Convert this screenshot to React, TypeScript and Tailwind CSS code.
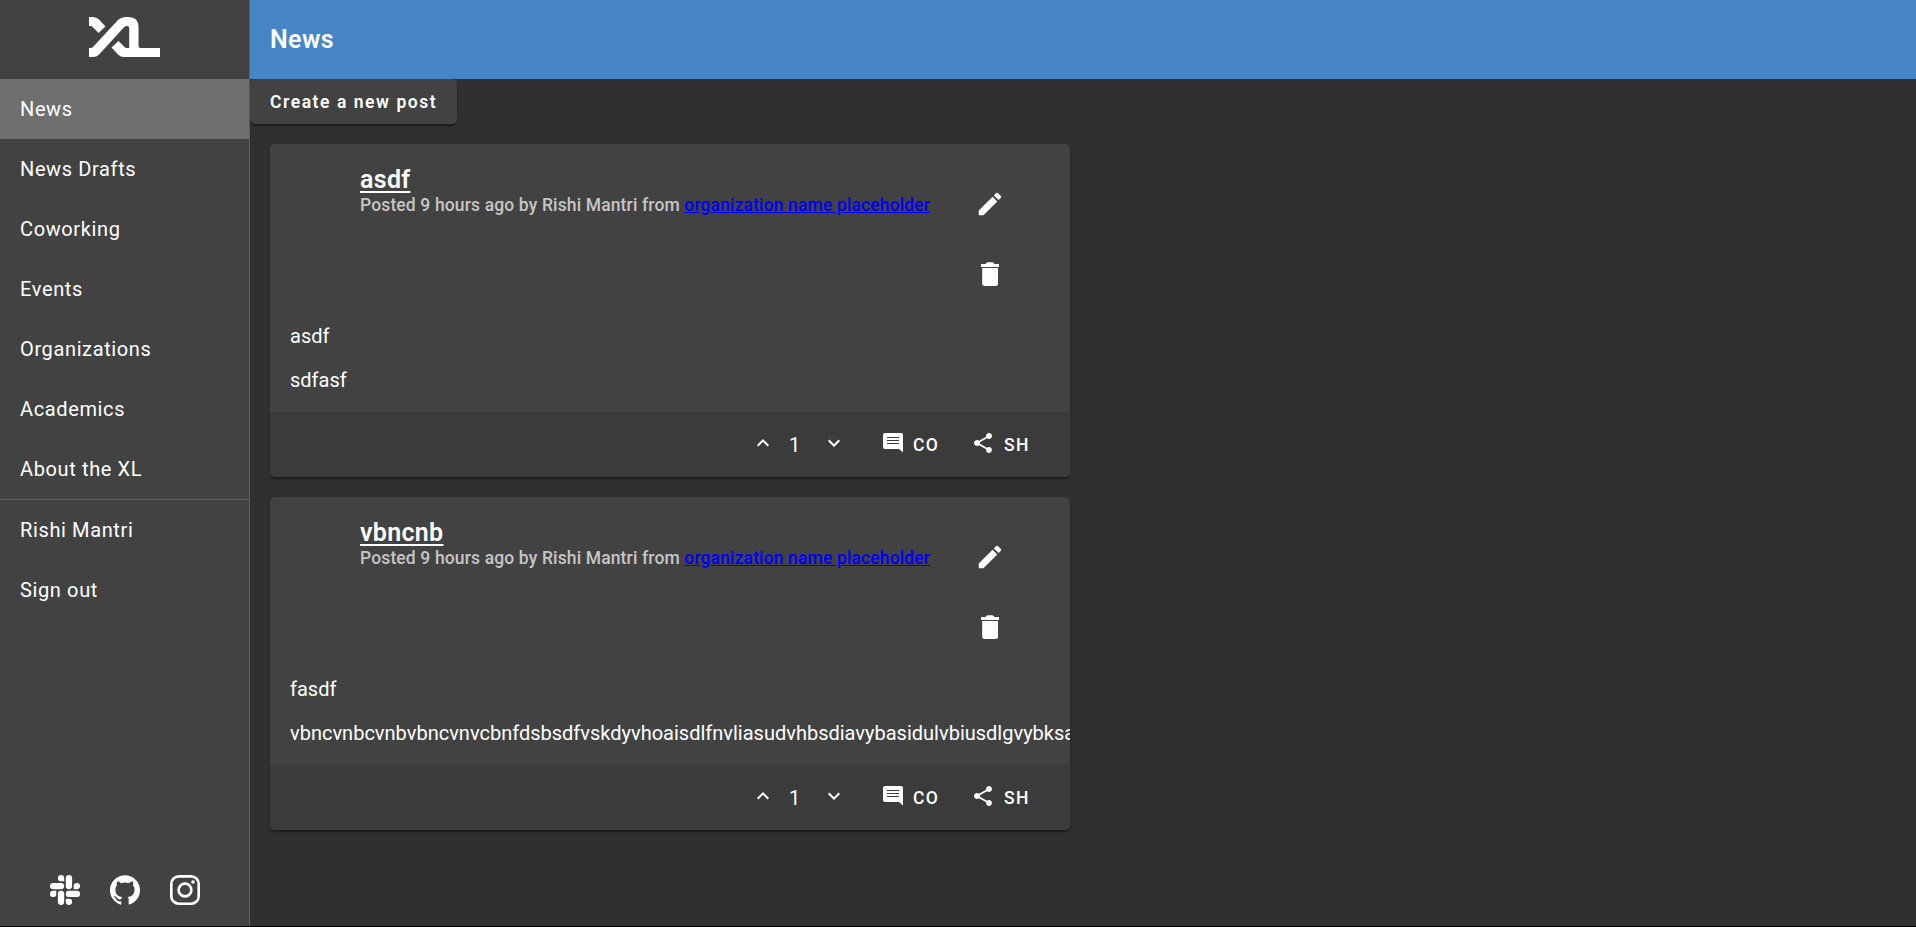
import { MdEdit, MdExpandLess, MdExpandMore, MdShare } from "react-icons/md";

const primaryLinks = ["News", "News Drafts", "Coworking", "Events", "Organizations", "Academics", "About the XL"];
const accountLinks = ["Rishi Mantri", "Sign out"];

type Post = { title: string; body: string[] };

const posts: Post[] = [
  { title: "asdf", body: ["asdf", "sdfasf"] },
  {
    title: "vbncnb",
    body: ["fasdf", "vbncvnbcvnbvbncvnvcbnfdsbsdfvskdyvhoaisdlfnvliasudvhbsdiavybasidulvbiusdlgvybksadvbkuysdb"],
  },
];

function Logo() {
  return (
    <svg width="71" height="40" viewBox="0 0 71 40" fill="#fff" aria-label="XL">
      <path d="M0 0H4Q7.500 0 10 2.500L16.500 9.500L9.500 16L3.500 9.700Q2.800 9 1.700 9H0Z" />
      <path
        fillRule="evenodd"
        d="M0 40V31H1.700Q3 31 4 30L28.500 3.500Q32 0 37 0H39.500Q49.500 0 49.500 10V29Q49.500 31 51.500 31H71V40H35Q31.500 40 29 37.500L22.500 30.500L29.500 24L35.500 30Q36.500 31 38 31H40.200V11Q40.200 9 38 9Q36.300 9 35 10.300L11 36.500Q8 40 4 40Z"
      />
    </svg>
  );
}

function NavItem({ label, active }: { label: string; active?: boolean }) {
  return (
    <a className={`flex h-[60px] items-center px-5 text-[20px] tracking-[0.625px] ${active ? "bg-[#6f6f6f]" : ""}`}>
      {label}
    </a>
  );
}

function TrashIcon() {
  return (
    <svg width="30" height="30" viewBox="0 0 30 30" fill="#fff">
      <path d="M6 5H10.500Q11.300 3.200 13 3.200H17Q18.700 3.200 19.500 5H24V8H6Z" />
      <path d="M7.200 9H23V24.500Q23 27 20.500 27H9.700Q7.200 27 7.200 24.500Z" />
    </svg>
  );
}

function CommentIcon() {
  return (
    <svg width="24" height="24" viewBox="0 0 24 24" className="mb-[3px] ml-[35px]">
      <path d="M4 2H20.300Q22 2 22 3.700V21.500L18 18H4Q2 18 2 16V4Q2 2 4 2Z" fill="#fff" />
      <path d="M6 6.500H18M6 9.500H18M6 12.500H18" stroke="#3b3b3b" strokeWidth="1.200" />
    </svg>
  );
}

function SlackIcon() {
  return (
    <svg width="30" height="30" viewBox="0 0 24 24" fill="#fff">
      <path d="M5.042 15.165a2.528 2.528 0 0 1-2.520 2.523A2.528 2.528 0 0 1 0 15.165a2.527 2.527 0 0 1 2.522-2.520h2.520v2.520zM6.313 15.165a2.527 2.527 0 0 1 2.521-2.520 2.527 2.527 0 0 1 2.521 2.520v6.313A2.528 2.528 0 0 1 8.834 24a2.528 2.528 0 0 1-2.521-2.522v-6.313zM8.834 5.042a2.528 2.528 0 0 1-2.521-2.520A2.528 2.528 0 0 1 8.834 0a2.528 2.528 0 0 1 2.521 2.522v2.520H8.834zM8.834 6.313a2.528 2.528 0 0 1 2.521 2.521 2.528 2.528 0 0 1-2.521 2.521H2.522A2.528 2.528 0 0 1 0 8.834a2.528 2.528 0 0 1 2.522-2.521h6.312zM18.956 8.834a2.528 2.528 0 0 1 2.522-2.521A2.528 2.528 0 0 1 24 8.834a2.528 2.528 0 0 1-2.522 2.521h-2.522V8.834zM17.688 8.834a2.528 2.528 0 0 1-2.523 2.521 2.527 2.527 0 0 1-2.520-2.521V2.522A2.527 2.527 0 0 1 15.165 0a2.528 2.528 0 0 1 2.523 2.522v6.312zM15.165 18.956a2.528 2.528 0 0 1 2.523 2.522A2.528 2.528 0 0 1 15.165 24a2.527 2.527 0 0 1-2.520-2.522v-2.522h2.520zM15.165 17.688a2.527 2.527 0 0 1-2.520-2.523 2.526 2.526 0 0 1 2.520-2.520h6.313A2.527 2.527 0 0 1 24 15.165a2.528 2.528 0 0 1-2.522 2.523h-6.313z" />
    </svg>
  );
}

function GithubIcon() {
  return (
    <svg width="30" height="30" viewBox="0 0 24 24" fill="#fff">
      <path d="M12 .297c-6.630 0-12 5.373-12 12 0 5.303 3.438 9.800 8.205 11.385.6.113.82-.258.82-.577 0-.285-.01-1.040-.015-2.040-3.338.724-4.042-1.610-4.042-1.610C4.422 18.070 3.633 17.700 3.633 17.700c-1.087-.744.084-.729.084-.729 1.205.084 1.838 1.236 1.838 1.236 1.070 1.835 2.809 1.305 3.495.998.108-.776.417-1.305.76-1.605-2.665-.3-5.466-1.332-5.466-5.930 0-1.310.465-2.380 1.235-3.220-.135-.303-.54-1.523.105-3.176 0 0 1.005-.322 3.300 1.230.96-.267 1.980-.399 3-.405 1.020.006 2.040.138 3 .405 2.280-1.552 3.285-1.230 3.285-1.230.645 1.653.24 2.873.12 3.176.765.84 1.230 1.910 1.230 3.220 0 4.610-2.805 5.625-5.475 5.920.42.36.81 1.096.81 2.220 0 1.606-.015 2.896-.015 3.286 0 .315.21.69.825.57C20.565 22.092 24 17.592 24 12.297c0-6.627-5.373-12-12-12" />
    </svg>
  );
}

function InstagramIcon() {
  return (
    <svg width="30" height="30" viewBox="0 0 24 24" fill="none" stroke="#fff" strokeWidth="2.100">
      <rect x="1.050" y="1.050" width="21.900" height="21.900" rx="6" />
      <circle cx="12" cy="12" r="5.100" />
      <circle cx="18.400" cy="5.600" r="1.440" fill="#fff" stroke="none" />
    </svg>
  );
}

function Sidebar() {
  return (
    <aside className="flex w-[250px] shrink-0 flex-col border-r border-[#5f5f5f] bg-[#424242]">
      <div className="flex h-[79px] justify-center pt-[17px]">
        <Logo />
      </div>
      <nav>
        {primaryLinks.map((label) => (
          <NavItem key={label} label={label} active={label === "News"} />
        ))}
      </nav>
      <div className="border-t border-[#5f5f5f]">
        {accountLinks.map((label) => (
          <NavItem key={label} label={label} />
        ))}
      </div>
      <div className="mt-auto mb-[21px] flex justify-center gap-[30px]">
        <SlackIcon />
        <GithubIcon />
        <InstagramIcon />
      </div>
    </aside>
  );
}

const cardShadow =
  "shadow-[0_2.5px_1.25px_-1.25px_rgba(0,0,0,0.2),0_1.25px_1.25px_0_rgba(0,0,0,0.14),0_1.25px_3.75px_0_rgba(0,0,0,0.12)]";

function PostCard({ title, body }: Post) {
  return (
    <article className={`flex h-[333px] w-[800px] flex-col overflow-hidden rounded-[5px] bg-[#424242] ${cardShadow}`}>
      <header className="flex h-[170px] shrink-0 pl-[90px]">
        <div className="w-[595px] shrink-0 pt-[21px]">
          <h2 className="text-[25px] leading-[30px] font-semibold tracking-[0.3px] underline decoration-2 underline-offset-[3px]">
            {title}
          </h2>
          <p className="-mt-px text-[17.5px] leading-[22px] font-medium tracking-[0.135px] whitespace-nowrap text-[#c6c6c6]">
            Posted 9 hours ago by Rishi Mantri from{" "}
            <a className="font-medium text-[#0000fa] underline">organization name placeholder</a>
          </p>
        </div>
        <div className="flex w-[70px] shrink-0 flex-col items-center gap-10 pt-[45px] text-[30px]">
          <MdEdit />
          <TrashIcon />
        </div>
      </header>
      <div className="flex flex-1 flex-col gap-5 px-5 pt-[10px] text-[20px] leading-6">
        {body.map((line) => (
          <p key={line}>{line}</p>
        ))}
      </div>
      <footer className="flex h-[65px] shrink-0 items-center bg-[#3b3b3b] pl-[481px] text-[17.5px] font-medium">
        <MdExpandLess className="mb-[3px] text-[24px]" />
        <span className="w-[47px] pt-px pr-2 text-center text-[20px] font-normal">1</span>
        <MdExpandMore className="mb-[3px] text-[24px]" />
        <CommentIcon />
        <span className="ml-2 w-[58px] pt-0.5 tracking-[1.4px]">CO</span>
        <MdShare className="mb-[3px] text-[24px]" />
        <span className="ml-[9px] pt-0.5 tracking-[1.4px]">SH</span>
      </footer>
    </article>
  );
}

export default function App() {
  return (
    <div className="flex h-[927px] overflow-hidden border-b border-black bg-[#303030] font-[Roboto,sans-serif] text-white">
      <Sidebar />
      <main className="flex min-w-0 flex-1 flex-col items-start">
        <header className="flex h-[79px] w-full items-center bg-[#4686c7] px-5">
          <h1 className="text-[25px] font-semibold tracking-[0.4px]">News</h1>
        </header>
        <button
          className={`flex h-[45px] w-[207px] items-center rounded-[5px] bg-[#424242] px-5 pt-0.5 text-[17.5px] font-semibold tracking-[1.55px] whitespace-nowrap ${cardShadow}`}
        >
          Create a new post
        </button>
        <section className="flex flex-col gap-5 p-5">
          {posts.map((post) => (
            <PostCard key={post.title} {...post} />
          ))}
        </section>
      </main>
    </div>
  );
}
